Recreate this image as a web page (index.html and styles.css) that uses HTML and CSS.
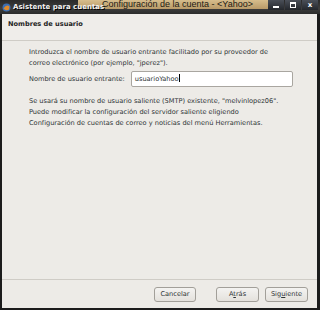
FILE: index.html
```html
<!DOCTYPE html>
<html lang="es">
<head>
    <meta charset="UTF-8">
    <link rel="stylesheet" href="styles.css">
    <title>Asistente para cuentas</title>
</head>
<body>
    <div class="topbar">
        <div class="backwin">Configuración de la cuenta - &lt;Yahoo&gt;</div>
        <div class="title">
            <svg class="appicon" width="9" height="9" viewBox="0 0 9 9">
                <circle cx="4.5" cy="4.5" r="4" fill="#3c6fb4"/>
                <path d="M1.5 5.5 Q4.5 1 7.5 3.5 L7 6.5 Q4 8.5 1.5 5.5 Z" fill="#e08a2a"/>
            </svg>
            Asistente para cuentas
        </div>
        <div class="winbtns">
            <span class="wbtn"><i class="min"></i></span>
            <span class="wbtn"><i class="max"></i></span>
            <span class="wbtn">x</span>
        </div>
    </div>

    <div class="dialog">
        <div class="head">Nombres de usuario</div>

        <div class="content">
            <p>Introduzca el nombre de usuario entrante facilitado por su proveedor de<br>correo electrónico (por ejemplo, "jperez").</p>

            <div class="field">
                <label for="user-in">Nombre de usuario entrante:</label>
                <div class="input" id="user-in">usuarioYahoo<span class="caret"></span></div>
            </div>

            <p>Se usará su nombre de usuario saliente (SMTP) existente, "melvinlopez06".<br>Puede modificar la configuración del servidor saliente eligiendo<br>Configuración de cuentas de correo y noticias del menú Herramientas.</p>
        </div>

        <div class="footer">
            <button class="btn cancel">Cancelar</button>
            <button class="btn">A<u>t</u>rás</button>
            <button class="btn">Sig<u>u</u>iente</button>
        </div>
    </div>
</body>
</html>
```

FILE: styles.css
```css
body {
    margin: 0;
    width: 320px;
    height: 310px;
    overflow: hidden;
    background-color: #1c1c1c;
    font-family: 'DejaVu Sans', sans-serif;
    color: #2e3436;
}

.topbar {
    position: relative;
    height: 14px;
    background: linear-gradient(#2a2a2a, #3d3d3d 60%, #2c2c2c);
}

.backwin {
    position: absolute;
    left: 78px;
    top: 0;
    width: 166px;
    height: 9px;
    padding-left: 24px;
    overflow: hidden;
    background: linear-gradient(#d7bd8c, #b99a68);
    color: #1d1a14;
    font-family: 'Liberation Sans', sans-serif;
    font-size: 9px;
    line-height: 9px;
    white-space: nowrap;
}

.title {
    position: relative;
    display: flex;
    align-items: center;
    gap: 2px;
    height: 14px;
    padding-left: 2px;
    color: #f2f2f2;
    font-size: 7px;
    font-weight: bold;
    text-shadow: 1px 1px 0 #000;
}

.appicon {
    flex: none;
}

.winbtns {
    position: absolute;
    right: 2px;
    top: 0;
    display: flex;
    gap: 1px;
}

.wbtn {
    width: 16px;
    height: 10px;
    display: flex;
    align-items: center;
    justify-content: center;
    background: linear-gradient(#4a4f58, #24272c);
    color: #fff;
    font-size: 7px;
    font-weight: bold;
}

.min {
    width: 6px;
    height: 2px;
    margin-top: 4px;
    background: #fff;
}

.max {
    width: 4px;
    height: 3px;
    border: 1px solid #fff;
    border-top-width: 2px;
}

.dialog {
    margin: 0 3px 0 2px;
    height: 294px;
    background-color: #edebe7;
    display: flex;
    flex-direction: column;
    font-size: 6.6px;
}

.head {
    height: 26px;
    line-height: 20px;
    padding-left: 6px;
    font-weight: bold;
    color: #1e1e1e;
    border-bottom: 1px solid #cfccc6;
    background-color: #efedea;
}

.content {
    flex: 1;
    padding: 6px 0 0 27px;
}

.content p {
    margin: 0;
    line-height: 11px;
}

.field {
    display: flex;
    align-items: center;
    gap: 6px;
    margin: 2px 0 9px;
}

.input {
    width: 157px;
    height: 14px;
    line-height: 14px;
    padding-left: 3px;
    background: #fff;
    border: 1px solid #a9a6a0;
    border-radius: 2px;
}

.caret {
    display: inline-block;
    width: 1px;
    height: 8px;
    background: #000;
    vertical-align: -1px;
}

.footer {
    height: 28px;
    border-top: 1px solid #cfccc6;
    display: flex;
    justify-content: flex-end;
    align-items: center;
    gap: 6px;
    padding-right: 9px;
}

.btn {
    width: 43px;
    height: 15px;
    padding: 0;
    font-family: inherit;
    font-size: 6.6px;
    color: #2e3436;
    background: linear-gradient(#f4f3f1, #e4e1dc);
    border: 1px solid #a29f99;
    border-radius: 3px;
}

.cancel {
    width: 42px;
    margin-right: 14px;
}
```
